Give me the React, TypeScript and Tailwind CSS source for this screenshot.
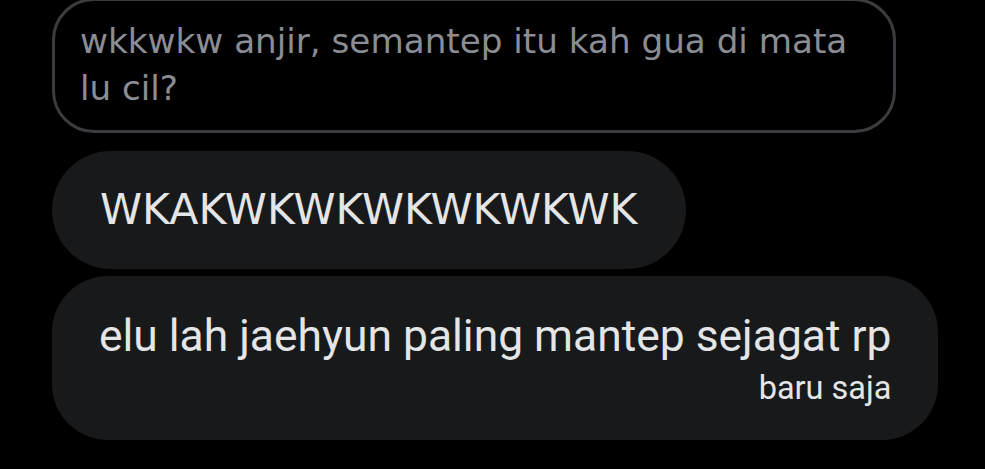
export default function App() {
  return (
    <div className="w-[985px] h-[469px] overflow-hidden bg-black">
      <div className="flex flex-col items-start pl-[52px]">
        <div className="mt-[-2px] w-[844px] rounded-[42px] border-[3px] border-[#3b3c3f] pl-[25px] pr-[30px] pt-[17px] pb-[18px] font-['DejaVu_Sans',sans-serif] text-[34.2px] leading-[47px] text-[#8a8d93]">
          wkkwkw anjir, semantep itu kah gua di mata lu cil?
        </div>

        <div className="mt-[18px] flex h-[118px] items-center rounded-full bg-[#18191b] px-[48px] font-['DejaVu_Sans',sans-serif] text-[42.6px] text-[#e4e5e6]">
          WKAKWKWKWKWKWKWK
        </div>

        <div className="mt-[7px] flex h-[164px] flex-col items-end rounded-[56px] bg-[#18191b] px-[47px] pt-[34px] font-['Roboto',sans-serif] text-[#e4e5e6]">
          <div className="text-[44.4px] leading-[52px]">elu lah jaehyun paling mantep sejagat rp</div>
          <div className="text-[32.5px] leading-[52px]">baru saja</div>
        </div>
      </div>
    </div>
  );
}
